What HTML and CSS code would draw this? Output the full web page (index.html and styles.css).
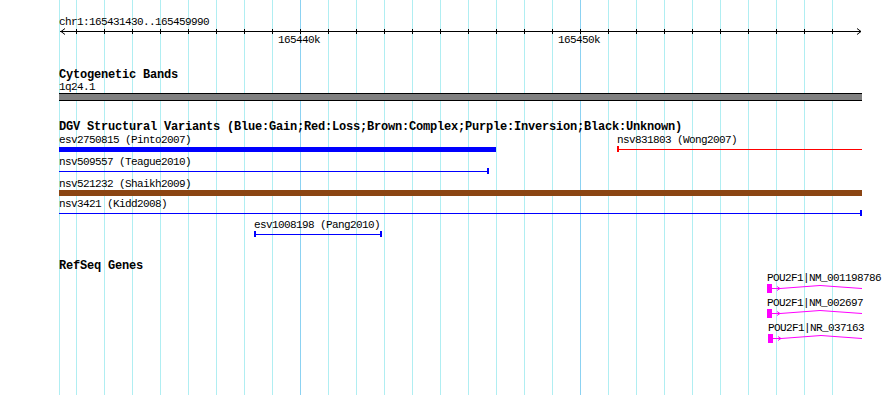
FILE: index.html
```html
<!DOCTYPE html>
<html lang="en">
<head>
<meta charset="utf-8">
<title>GBrowse tracks</title>
<link rel="stylesheet" href="styles.css">
</head>
<body>
<main class="panel">
  <section class="ruler">
    <div class="lbl">chr1:165431430..165459990</div>
    <svg class="axis" width="803" height="20" viewBox="0 0 803 20">
      <line x1="1" y1="3.5" x2="802" y2="3.5" stroke="#000"/>
      <path stroke="#000" d="M17.5 1V6M45.5 1V6M73.5 1V6M101.5 1V6M129.5 1V6M157.5 1V6M185.5 1V6M213.5 1V6M241.5 1V6M269.5 1V6M297.5 1V6M325.5 1V6M353.5 1V6M381.5 1V6M409.5 1V6M437.5 1V6M465.5 1V6M493.5 1V6M521.5 1V6M549.5 1V6M577.5 1V6M605.5 1V6M633.5 1V6M661.5 1V6M689.5 1V6M717.5 1V6M745.5 1V6M773.5 1V6"/>
      <polyline points="6,0.5 2,3.5 6,6.5" fill="none" stroke="#000"/>
      <polyline points="798,0.5 802,3.5 798,6.5" fill="none" stroke="#000"/>
      <text class="tick-lbl" x="219" y="15">165440k</text>
      <text class="tick-lbl" x="499" y="15">165450k</text>
    </svg>
  </section>

  <section class="track cyto">
    <h2 class="ttl">Cytogenetic Bands</h2>
    <div class="lbl">1q24.1</div>
    <div class="band"></div>
  </section>

  <section class="track dgv">
    <h2 class="ttl">DGV Structural Variants (Blue:Gain;Red:Loss;Brown:Complex;Purple:Inversion;Black:Unknown)</h2>
    <div class="row">
      <div class="feat blue" style="width:437px">
        <div class="lbl">esv2750815 (Pinto2007)</div>
        <div class="glyph"><div class="bar bar5"></div></div>
      </div>
      <div class="feat red" style="margin-left:121px;width:245px">
        <div class="lbl">nsv831803 (Wong2007)</div>
        <div class="glyph"><span class="tk"></span><span class="ln"></span></div>
      </div>
    </div>
    <div class="row gap4">
      <div class="feat blue" style="width:430px">
        <div class="lbl">nsv509557 (Teague2010)</div>
        <div class="glyph"><span class="ln"></span><span class="tk"></span></div>
      </div>
    </div>
    <div class="row gap4">
      <div class="feat brown" style="width:803px">
        <div class="lbl">nsv521232 (Shaikh2009)</div>
        <div class="glyph"><div class="bar bar6"></div></div>
      </div>
    </div>
    <div class="row gap2">
      <div class="feat blue" style="width:803px">
        <div class="lbl">nsv3421 (Kidd2008)</div>
        <div class="glyph"><span class="ln"></span><span class="tk"></span></div>
      </div>
    </div>
    <div class="row gap3">
      <div class="feat blue" style="margin-left:195px;width:128px">
        <div class="lbl">esv1008198 (Pang2010)</div>
        <div class="glyph"><span class="tk"></span><span class="ln"></span><span class="tk"></span></div>
      </div>
    </div>
  </section>

  <section class="track genes">
    <h2 class="ttl">RefSeq Genes</h2>
    <div class="grow" style="margin-left:708px">
      <div class="lbl">POU2F1|NM_001198786</div>
      <svg class="gene" width="95" height="10" viewBox="0 0 95 10">
        <rect x="0" y="0" width="5" height="9" fill="#ff00ff"/>
        <path d="M5 4.5H13M10 2.5L13 4.5L10 6.5" fill="none" stroke="#ff00ff"/>
        <polyline points="13,4.5 53,1.5 95,4.5" fill="none" stroke="#ff00ff"/>
      </svg>
    </div>
    <div class="grow" style="margin-left:708px">
      <div class="lbl">POU2F1|NM_002697</div>
      <svg class="gene" width="95" height="10" viewBox="0 0 95 10">
        <rect x="0" y="0" width="5" height="9" fill="#ff00ff"/>
        <path d="M5 4.5H13M10 2.5L13 4.5L10 6.5" fill="none" stroke="#ff00ff"/>
        <polyline points="13,4.5 53,1.5 95,4.5" fill="none" stroke="#ff00ff"/>
      </svg>
    </div>
    <div class="grow" style="margin-left:709px">
      <div class="lbl">POU2F1|NR_037163</div>
      <svg class="gene" width="94" height="10" viewBox="0 0 94 10">
        <rect x="0" y="0" width="5" height="9" fill="#ff00ff"/>
        <path d="M5 4.5H13M10 2.5L13 4.5L10 6.5" fill="none" stroke="#ff00ff"/>
        <polyline points="13,4.5 53,1.5 94,4.5" fill="none" stroke="#ff00ff"/>
      </svg>
    </div>
  </section>
</main>
</body>
</html>
```

FILE: styles.css
```css
* {
  box-sizing: border-box;
  margin: 0;
  padding: 0;
}

html, body {
  margin: 0;
  width: 890px;
  height: 395px;
  overflow: hidden;
  background: #ffffff;
}

.panel {
  display: block;
  width: 890px;
  height: 395px;
  padding: 16px 0 0 59px;
  font-family: "Liberation Mono", "DejaVu Sans Mono", monospace;
  color: #000;
  background-color: #ffffff;
  background-image:
    linear-gradient(#8cd2f2, #8cd2f2),
    linear-gradient(#8cd2f2, #8cd2f2),
    linear-gradient(#b0eef2, #b0eef2),
    repeating-linear-gradient(to right, #b0eef2 0 1px, transparent 1px 28px);
  background-size: 1px 100%, 1px 100%, 1px 100%, 784px 100%;
  background-position: 300px 0, 580px 0, 59px 0, 76px 0;
  background-repeat: no-repeat;
}

.lbl {
  font-size: 11px;
  line-height: 12px;
  height: 12px;
  letter-spacing: -0.6px;
  white-space: nowrap;
  color: #000;
}

.ttl {
  font-size: 12px;
  font-weight: bold;
  line-height: 12px;
  height: 12px;
  letter-spacing: -0.2px;
  white-space: nowrap;
  color: #000;
}

.ruler {
  height: 32px;
}

.axis {
  display: block;
  overflow: visible;
}

.tick-lbl {
  font-family: "Liberation Mono", "DejaVu Sans Mono", monospace;
  font-size: 11px;
  letter-spacing: -0.6px;
  fill: #000;
}

.cyto {
  margin-top: 21px;
}

.band {
  width: 803px;
  height: 8px;
  background: #808080;
  border-top: 1px solid #000;
  border-bottom: 1px solid #000;
}

.dgv {
  margin-top: 22px;
}

.dgv .ttl {
  height: 11px;
  line-height: 9px;
}

.row {
  display: flex;
  height: 18px;
}

.gap2 { margin-top: 2px; }
.gap3 { margin-top: 3px; }
.gap4 { margin-top: 4px; }

.feat {
  display: flex;
  flex-direction: column;
}

.blue { color: #0000ff; }
.red { color: #ff0000; }
.brown { color: #8b4513; }

.glyph {
  height: 6px;
  display: flex;
  align-items: center;
}

.bar {
  width: 100%;
  background: currentColor;
}

.bar5 { height: 5px; }
.bar6 { height: 6px; }

.ln {
  flex: 1;
  height: 1px;
  background: currentColor;
}

.tk {
  width: 2px;
  height: 6px;
  background: currentColor;
}

.genes {
  margin-top: 23px;
}

.grow {
  display: flex;
  flex-direction: column;
  height: 22px;
}

.grow + .grow {
  margin-top: 3px;
}

.gene {
  display: block;
}
```
